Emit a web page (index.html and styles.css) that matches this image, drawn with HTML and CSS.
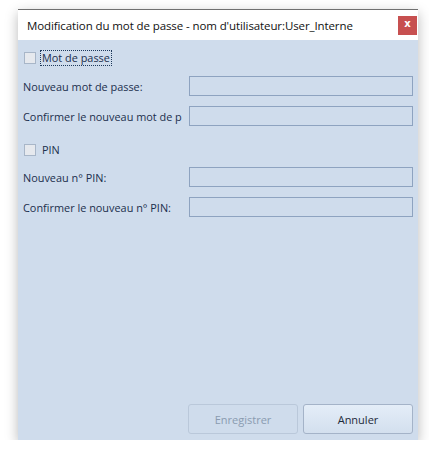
FILE: index.html
```html
<!DOCTYPE html>
<html lang="fr">
<head>
    <meta charset="UTF-8">
    <title>Modification du mot de passe</title>
    <link rel="stylesheet" href="styles.css">
</head>
<body>
    <div class="window">
        <div class="titlebar">
            <span class="title">Modification du mot de passe - nom d'utilisateur:User_Interne</span>
            <button class="close">x</button>
        </div>
        <div class="content">
            <label class="check focus"><span class="box"></span><span class="check-text">Mot de passe</span></label>
            <div class="row">
                <span class="label">Nouveau mot de passe:</span>
                <input type="text" class="field">
            </div>
            <div class="row">
                <span class="label">Confirmer le nouveau mot de p</span>
                <input type="text" class="field">
            </div>

            <label class="check pin"><span class="box"></span><span class="check-text">PIN</span></label>
            <div class="row">
                <span class="label">Nouveau n° PIN:</span>
                <input type="text" class="field">
            </div>
            <div class="row">
                <span class="label">Confirmer le nouveau n° PIN:</span>
                <input type="text" class="field">
            </div>

            <div class="buttons">
                <button class="btn" disabled>Enregistrer</button>
                <button class="btn">Annuler</button>
            </div>
        </div>
    </div>
</body>
</html>
```

FILE: styles.css
```css
body {
    margin: 0;
    background-color: #ffffff;
    font-family: "Open Sans", "Noto Sans", sans-serif;
}
.window {
    margin: 9px 0 0 18px;
    width: 400px;
    height: 431px;
    display: flex;
    flex-direction: column;
    border-top: 1px solid #707070;
    box-sizing: border-box;
    box-shadow: 0 4px 12px rgba(0, 0, 0, 0.28);
}
.titlebar {
    height: 30px;
    background-color: #ffffff;
    display: flex;
    align-items: center;
    padding: 0 0 0 9px;
}
.title {
    flex: 1;
    font-size: 11.5px;
    color: #111;
    letter-spacing: -0.1px;
}
.close {
    width: 19px;
    height: 19px;
    margin: 0 1px 0 0;
    padding: 0 0 3px 0;
    border: none;
    background-color: #c75050;
    color: #fff;
    font-family: "DejaVu Sans", sans-serif;
    font-weight: bold;
    font-size: 10px;
    line-height: 1;
}
.content {
    flex: 1;
    background-color: #cfdcec;
    display: flex;
    flex-direction: column;
    padding: 10px 5px 6px 5px;
    font-size: 10.9px;
    color: #1b2f4c;
}
.check {
    display: flex;
    align-items: center;
    height: 16px;
    padding-left: 1px;
}
.box {
    width: 10px;
    height: 10px;
    border: 1px solid #a8b6c8;
    background-color: #e6e9ee;
    margin-right: 4px;
}
.check-text {
    padding: 0 1px;
    height: 14px;
    line-height: 14px;
}
.focus .check-text {
    border: 1px dotted #1e395b;
}
.pin {
    margin-top: 16px;
}
.pin .check-text {
    margin-left: 1px;
}
.row {
    display: flex;
    align-items: center;
    margin-top: 10px;
}
.pin + .row {
    margin-top: 9px;
}
.label {
    width: 166px;
    white-space: nowrap;
    overflow: hidden;
}
.field {
    width: 224px;
    height: 20px;
    box-sizing: border-box;
    border: 1px solid #8ea3c0;
    background-color: #cfdcec;
    margin: 0;
}
.buttons {
    margin-top: auto;
    display: flex;
    justify-content: flex-end;
    gap: 5px;
}
.btn {
    width: 110px;
    height: 30px;
    border: 1px solid #a4b3c8;
    border-radius: 3px;
    background: linear-gradient(#e4edf8, #d3dfee);
    font-family: "Open Sans", "Noto Sans", sans-serif;
    font-size: 11px;
    color: #1e2a3a;
}
.btn:disabled {
    background: #cfdcec;
    border-color: #bac8da;
    color: #8a9bb0;
}
```
